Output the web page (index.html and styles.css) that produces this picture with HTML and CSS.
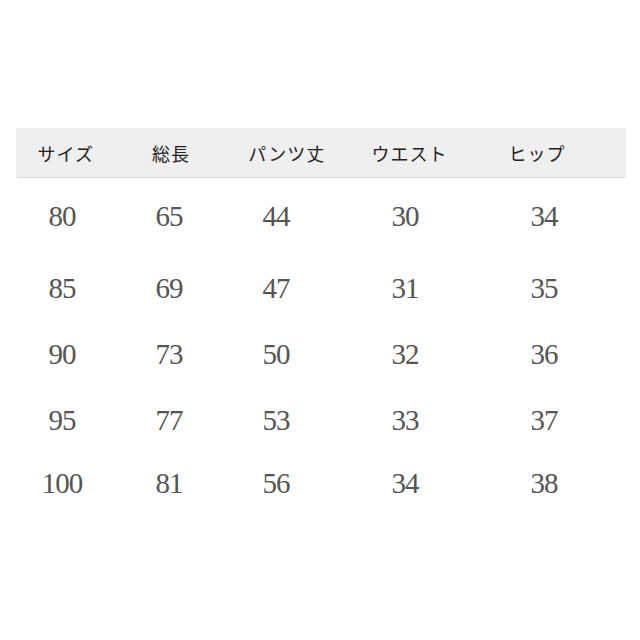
FILE: index.html
```html
<!DOCTYPE html>
<html lang="ja">
<head>
<meta charset="utf-8">
<title>サイズ表</title>
<link rel="stylesheet" href="styles.css">
</head>
<body>
<div class="page">
  <div class="head">
    <div>サイズ</div><div>総長</div><div>パンツ丈</div><div>ウエスト</div><div>ヒップ</div>
  </div>
  <div class="rows">
    <div class="row r1"><div>80</div><div>65</div><div>44</div><div>30</div><div>34</div></div>
    <div class="row r2"><div>85</div><div>69</div><div>47</div><div>31</div><div>35</div></div>
    <div class="row r3"><div>90</div><div>73</div><div>50</div><div>32</div><div>36</div></div>
    <div class="row r4"><div>95</div><div>77</div><div>53</div><div>33</div><div>37</div></div>
    <div class="row r5"><div>100</div><div>81</div><div>56</div><div>34</div><div>38</div></div>
  </div>
</div>
</body>
</html>
```
FILE: styles.css
```css
html, body { margin: 0; padding: 0; background: #fff; }
.page { width: 640px; height: 640px; padding-top: 128px; box-sizing: border-box; }
.head {
  margin-left: 16px;
  width: 610px;
  height: 49px;
  background: #efefef;
  box-shadow: 0 2px 1px -1px #dcdcdc;
  display: grid;
  grid-template-columns: 99.5px 111px 120.5px 125px 130px;
  align-items: center;
  font-family: "Noto Sans CJK JP", sans-serif;
  font-size: 18px;
  color: #222;
  text-align: center;
  letter-spacing: 1px;
}
.rows { margin-left: 16px; padding-top: 19px; }
.row {
  display: grid;
  grid-template-columns: 92px 122px 92px 166px 112px;
  font-family: "Liberation Serif", serif;
  font-size: 29px;
  letter-spacing: -1px;
  color: #555;
  text-align: center;
  line-height: 40px;
}
.r1 { height: 72px; }
.r2 { height: 66px; }
.r3 { height: 66px; }
.r4 { height: 63px; }
.r5 { height: 60px; }
```
